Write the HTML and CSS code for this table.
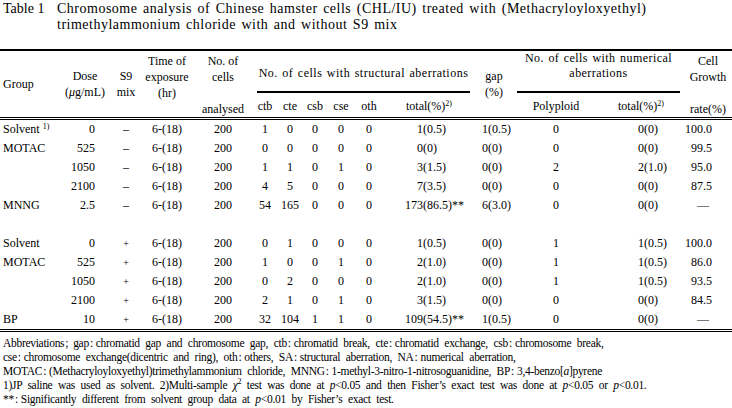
FILE: index.html
```html
<!DOCTYPE html>
<html>
<head>
<meta charset="utf-8">
<link rel="stylesheet" href="styles.css">
</head>
<body>
<div class="caption">
  <div class="label">Table 1</div>
  <div class="ctext">Chromosome analysis of Chinese hamster cells (CHL/IU) treated with (Methacryloyloxyethyl)<br>trimethylammonium chloride with and without S9 mix</div>
</div>
<table class="tbl">
  <colgroup>
    <col class="w-group"><col class="w-dose"><col class="w-s9"><col class="w-time"><col class="w-cells">
    <col class="w-ctb"><col class="w-cte"><col class="w-csb"><col class="w-cse"><col class="w-oth"><col class="w-total">
    <col class="w-gap"><col class="w-poly"><col class="w-ntotal"><col class="w-growth">
  </colgroup>
  <thead>
    <tr class="h1">
      <th rowspan="2" class="left mid">Group</th>
      <th rowspan="2" class="mid">Dose<br>(<i class="mu">μ</i>g/mL)</th>
      <th rowspan="2" class="mid">S9<br>mix</th>
      <th rowspan="2" class="top">Time of<br>exposure<br>(hr)</th>
      <th rowspan="2" class="top">No. of<br>cells<br>&nbsp;<br>analysed</th>
      <th colspan="6" class="grp"><div class="rule rs">No. of cells with structural aberrations</div></th>
      <th rowspan="2" class="mid gaph">gap<br>(%)</th>
      <th colspan="2" class="grp"><div class="rule rn">No. of cells with numerical<br>aberrations</div></th>
      <th rowspan="2" class="top">Cell<br>Growth<br>&nbsp;<br>rate(%)</th>
    </tr>
    <tr class="h2">
      <th>ctb</th><th>cte</th><th>csb</th><th>cse</th><th>oth</th><th>total(%)<sup>2)</sup></th>
      <th>Polyploid</th><th>total(%)<sup>2)</sup></th>
    </tr>
  </thead>
  <tbody>
    <tr><td class="left">Solvent <sup>1)</sup></td><td class="dose">0</td><td>–</td><td>6-(18)</td><td>200</td><td>1</td><td>0</td><td>0</td><td>0</td><td>0</td><td class="tot"><span class="n">1</span>(0.5)</td><td class="gp">1(0.5)</td><td>0</td><td class="nt">0(0)</td><td class="gr">100.0</td></tr>
    <tr><td class="left">MOTAC</td><td class="dose">525</td><td>–</td><td>6-(18)</td><td>200</td><td>0</td><td>0</td><td>0</td><td>0</td><td>0</td><td class="tot"><span class="n">0</span>(0)</td><td class="gp">0(0)</td><td>0</td><td class="nt">0(0)</td><td class="gr">99.5</td></tr>
    <tr><td class="left"></td><td class="dose">1050</td><td>–</td><td>6-(18)</td><td>200</td><td>1</td><td>1</td><td>0</td><td>1</td><td>0</td><td class="tot"><span class="n">3</span>(1.5)</td><td class="gp">0(0)</td><td>2</td><td class="nt">2(1.0)</td><td class="gr">95.0</td></tr>
    <tr><td class="left"></td><td class="dose">2100</td><td>–</td><td>6-(18)</td><td>200</td><td>4</td><td>5</td><td>0</td><td>0</td><td>0</td><td class="tot"><span class="n">7</span>(3.5)</td><td class="gp">0(0)</td><td>0</td><td class="nt">0(0)</td><td class="gr">87.5</td></tr>
    <tr><td class="left">MNNG</td><td class="dose">2.5</td><td>–</td><td>6-(18)</td><td>200</td><td>54</td><td>165</td><td>0</td><td>0</td><td>0</td><td class="tot"><span class="n">173</span>(86.5)**</td><td class="gp">6(3.0)</td><td>0</td><td class="nt">0(0)</td><td class="gr dash">—</td></tr>
    <tr class="blank"><td colspan="15"></td></tr>
    <tr><td class="left">Solvent</td><td class="dose">0</td><td class="plus">+</td><td>6-(18)</td><td>200</td><td>0</td><td>1</td><td>0</td><td>0</td><td>0</td><td class="tot"><span class="n">1</span>(0.5)</td><td class="gp">0(0)</td><td>1</td><td class="nt">1(0.5)</td><td class="gr">100.0</td></tr>
    <tr><td class="left">MOTAC</td><td class="dose">525</td><td class="plus">+</td><td>6-(18)</td><td>200</td><td>1</td><td>0</td><td>0</td><td>1</td><td>0</td><td class="tot"><span class="n">2</span>(1.0)</td><td class="gp">0(0)</td><td>1</td><td class="nt">1(0.5)</td><td class="gr">86.0</td></tr>
    <tr><td class="left"></td><td class="dose">1050</td><td class="plus">+</td><td>6-(18)</td><td>200</td><td>0</td><td>2</td><td>0</td><td>0</td><td>0</td><td class="tot"><span class="n">2</span>(1.0)</td><td class="gp">0(0)</td><td>1</td><td class="nt">1(0.5)</td><td class="gr">93.5</td></tr>
    <tr><td class="left"></td><td class="dose">2100</td><td class="plus">+</td><td>6-(18)</td><td>200</td><td>2</td><td>1</td><td>0</td><td>1</td><td>0</td><td class="tot"><span class="n">3</span>(1.5)</td><td class="gp">0(0)</td><td>0</td><td class="nt">0(0)</td><td class="gr">84.5</td></tr>
    <tr><td class="left">BP</td><td class="dose">10</td><td class="plus">+</td><td>6-(18)</td><td>200</td><td>32</td><td>104</td><td>1</td><td>1</td><td>0</td><td class="tot"><span class="n">109</span>(54.5)**</td><td class="gp">1(0.5)</td><td>0</td><td class="nt">0(0)</td><td class="gr dash">—</td></tr>
  </tbody>
</table>
<div class="notes">
  <div>Abbreviations<span class="sc">;</span>gap<span class="co">:</span>chromatid gap and chromosome gap, ctb<span class="co">:</span>chromatid break, cte<span class="co">:</span>chromatid exchange, csb<span class="co">:</span>chromosome break,</div>
  <div>cse<span class="co">:</span>chromosome exchange(dicentric and ring), oth<span class="co">:</span>others, SA<span class="co">:</span>structural aberration, NA<span class="co">:</span>numerical aberration,</div>
  <div>MOTAC<span class="co">:</span>(Methacryloyloxyethyl)trimethylammonium chloride, MNNG<span class="co">:</span>1-methyl-3-nitro-1-nitrosoguanidine, BP<span class="co">:</span>3,4-benzo[<i>a</i>]pyrene</div>
  <div>1)JP saline was used as solvent. 2)Multi-sample <i>χ</i><sup class="sq">2</sup> test was done at <i>p</i>&lt;0.05 and then Fisher’s exact test was done at <i>p</i>&lt;0.05 or <i>p</i>&lt;0.01.</div>
  <div>**<span class="co">:</span>Significantly different from solvent group data at <i>p</i>&lt;0.01 by Fisher’s exact test.</div>
</div>
</body>
</html>
```

FILE: styles.css
```css
html, body {
  margin: 0;
  padding: 0;
  background: #fff;
  color: #000;
}
body {
  font-family: "Liberation Serif", serif;
  width: 732px;
  height: 408px;
  overflow: hidden;
}
.caption {
  display: flex;
  font-size: 14px;
  line-height: 16px;
  padding: 1px 0 0 3px;
  height: 49px;
  box-sizing: border-box;
}
.label {
  width: 54px;
  flex: none;
}
.ctext {
  letter-spacing: 0.5px;
  word-spacing: 1.5px;
  white-space: nowrap;
}
.tbl {
  width: 732px;
  table-layout: fixed;
  border-collapse: collapse;
  border-top: 2px solid #000;
  font-size: 12px;
}
.w-group { width: 58px; }
.w-dose { width: 54px; }
.w-s9 { width: 28px; }
.w-time { width: 54px; }
.w-cells { width: 58px; }
.w-ctb { width: 26px; }
.w-cte { width: 24px; }
.w-csb { width: 26px; }
.w-cse { width: 26px; }
.w-oth { width: 30px; }
.w-total { width: 90px; }
.w-gap { width: 40px; }
.w-poly { width: 84px; }
.w-ntotal { width: 86px; }
.w-growth { width: 48px; }

.tbl thead {
  border-bottom: 3px double #000;
}
.tbl th {
  font-weight: normal;
  padding: 0;
  text-align: center;
  line-height: 16px;
  white-space: nowrap;
}
.tbl th.left { text-align: left; padding-left: 3px; }
.tbl th.mid { vertical-align: middle; }
.tbl th.top { vertical-align: top; padding-top: 2px; }
.h1 { height: 43px; }
.h2 { height: 25px; }
.h2 th { vertical-align: middle; padding-top: 2px; }
.tbl th.grp { vertical-align: bottom; }
.rule {
  border-bottom: 2px solid #000;
  line-height: 15px;
}
.rs { margin: 0 4px 0 5px; padding-bottom: 10px; letter-spacing: 0.5px; word-spacing: 1px; }
.rn { margin: 0 4px 0 3px; padding-bottom: 10px; letter-spacing: 0.45px; word-spacing: 1px; }
.mu { font-style: italic; }
sup {
  font-size: 8px;
  line-height: 0;
  vertical-align: 4px;
}
.tbl td {
  height: 19px;
  padding: 0;
  text-align: center;
  white-space: nowrap;
  line-height: 19px;
}
.tbl td.left { text-align: left; padding-left: 3px; }
.tbl td.dose { text-align: right; padding-right: 17px; }
.tbl td.plus { font-size: 10px; }
.tbl td.tot { text-align: left; padding-left: 4px; }
.n { display: inline-block; width: 35px; text-align: right; }
.tbl td.gp { text-align: left; padding-left: 8px; }
.tbl td.nt { text-align: left; padding-left: 40px; }
.tbl td.gr { text-align: right; padding-right: 20px; }
.tbl td.dash { padding-right: 23px; }
.tbl tbody { border-bottom: 3px double #000; }
.notes {
  font-size: 11.5px;
  line-height: 14px;
  padding: 4px 0 0 3px;
  white-space: nowrap;
  letter-spacing: -0.3px;
  word-spacing: 3px;
}
.co { margin: 0 3px 0 1px; }
.sc { margin: 0 5px 0 1px; }
.sq { font-size: 8px; vertical-align: 5px; }
```
